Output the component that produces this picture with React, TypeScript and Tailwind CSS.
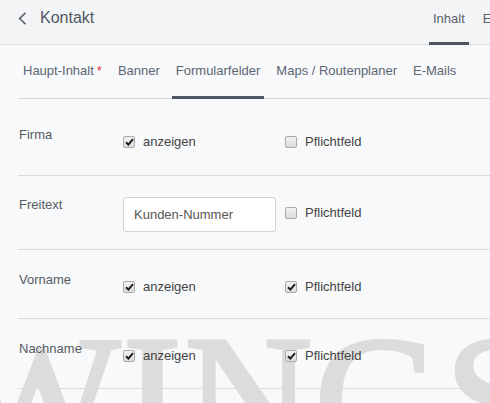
import React from 'react';

const font = { fontFamily: '"Liberation Sans", Arial, sans-serif' };

function Check({ checked }: { checked?: boolean }) {
  return (
    <span className="flex h-[12px] w-[12px] shrink-0 items-center justify-center rounded-[2px] border border-[#a9a9a9] bg-gradient-to-b from-[#f2f2f2] to-[#dcdcdc]">
      {checked && (
        <svg width="9" height="8" viewBox="0 0 9 8">
          <path d="M1 4.2 L3.4 6.6 L8 1.2" fill="none" stroke="#1e1e1e" strokeWidth="2" />
        </svg>
      )}
    </span>
  );
}

function Option({ label, checked }: { label: string; checked?: boolean }) {
  return (
    <label className="flex h-4 items-center gap-[8px] text-[13px] leading-4 text-[#444]">
      <Check checked={checked} />
      <span>{label}</span>
    </label>
  );
}

const subTabs = [
  { name: 'Haupt-Inhalt', required: true },
  { name: 'Banner' },
  { name: 'Formularfelder', active: true },
  { name: 'Maps / Routenplaner' },
  { name: 'E-Mails' },
];

const fields = [
  { label: 'Firma', show: true, required: false, h: 'h-[77px]', pt: 'pt-[28px]' },
  { label: 'Freitext', input: 'Kunden-Nummer', required: false, h: 'h-[74px]', pt: 'pt-[21px]' },
  { label: 'Vorname', show: true, required: true, h: 'h-[69px]', pt: 'pt-[22px]' },
  { label: 'Nachname', show: true, required: true, h: 'h-[70px]', pt: 'pt-[22px]' },
];

export default function App() {
  return (
    <div className="relative h-[403px] w-[490px] overflow-hidden bg-[#f8f9fa]" style={font}>
      {/* Watermark, behind the page content */}
      <div
        className="pointer-events-none absolute left-[-46px] top-[310px] select-none whitespace-nowrap text-[176px] leading-none tracking-[3px] text-[#dcdcdc] [-webkit-text-stroke:4px_#dcdcdc]"
        style={{ fontFamily: '"Liberation Serif", "Times New Roman", serif' }}
      >
        WINGS
      </div>

      <div className="relative w-[640px]">
        {/* Header */}
        <div className="flex h-[45px] border-b border-[#dcdee2] bg-[#f3f4f6]">
          <div className="flex w-[429px] items-start pt-[9px]">
            <svg className="ml-[18px] mt-[3px]" width="9" height="13" viewBox="0 0 9 13">
              <path d="M7.5 0.8 L1.6 6.5 L7.5 12.2" fill="none" stroke="#5b6370" strokeWidth="1.6" />
            </svg>
            <span className="ml-[13px] text-[16px] leading-[18px] text-[#4f5763]">Kontakt</span>
          </div>
          <div className="flex gap-[10px]">
            <div className="-mb-px border-b-[3px] border-[#4d5563] px-[4px] pt-[11px] text-[13px] leading-4 text-[#5a626e]">Inhalt</div>
            <div className="-mb-px border-b-[3px] border-transparent px-[4px] pt-[11px] text-[13px] leading-4 text-[#5a626e]">Einstellungen</div>
          </div>
        </div>

        {/* Sub tabs */}
        <div className="ml-[18px] flex h-[54px] gap-[8px] border-b border-[#d6d8dc]">
          {subTabs.map((t, i) => (
            <div
              key={t.name}
              className={`-mb-px border-b-[3px] px-[4px] pt-[18px] text-[13px] leading-4 text-[#5c6674] ${
                t.active ? 'border-[#4f5866]' : 'border-transparent'
              } ${i === 0 ? 'ml-px' : ''}`}
            >
              {t.name}
              {t.required && <span className="ml-[3px] text-[#e0303a]">*</span>}
            </div>
          ))}
        </div>

        {/* Form fields */}
        {fields.map(f => (
          <div key={f.label} className={`ml-[18px] flex border-b border-[#d9dbde] ${f.h} ${f.pt}`}>
            <div className="w-[105px] pl-px text-[13px] leading-4 text-[#555b63]">{f.label}</div>
            <div className="w-[162px]">
              {f.input ? (
                <div className="flex h-[35px] w-[153px] items-center rounded-[3px] border border-[#cfd2d6] bg-white pl-[10px] text-[13px] text-[#555]">
                  {f.input}
                </div>
              ) : (
                <div className="mt-[7px]">
                  <Option label="anzeigen" checked={f.show} />
                </div>
              )}
            </div>
            <div className={f.input ? 'mt-[8px]' : 'mt-[7px]'}>
              <Option label="Pflichtfeld" checked={f.required} />
            </div>
          </div>
        ))}
      </div>
    </div>
  );
}
